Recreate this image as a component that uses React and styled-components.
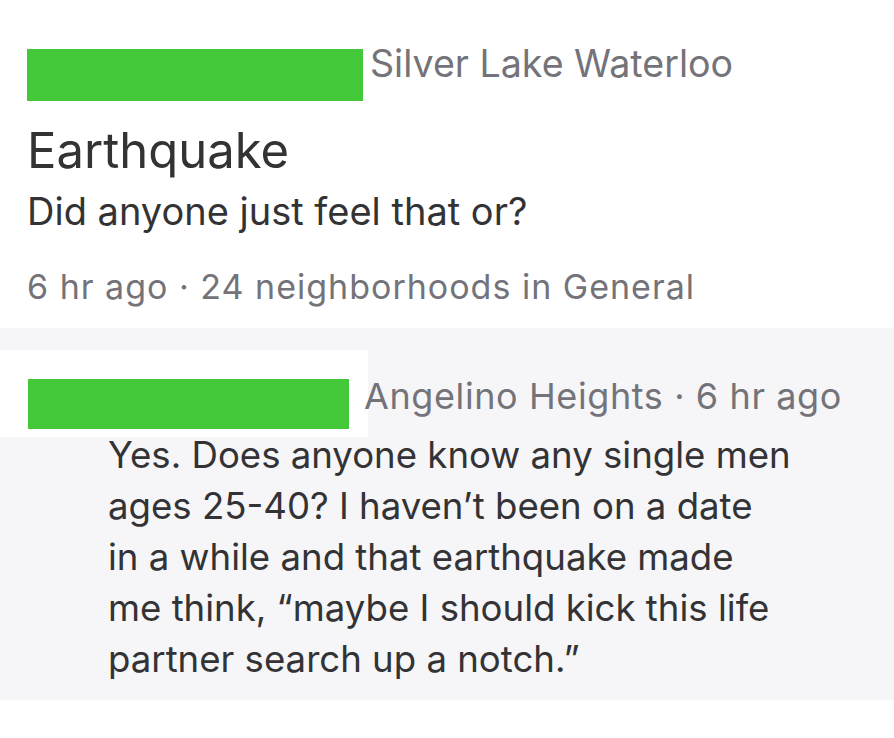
import styled, { createGlobalStyle } from 'styled-components';

const GlobalStyle = createGlobalStyle`
  html, body {
    margin: 0;
    padding: 0;
    background: #ffffff;
  }
  body {
    font-family: Inter, "Liberation Sans", Arial, sans-serif;
    color: #333336;
  }
`;

const Page = styled.div`
  width: 894px;
  height: 738px;
  overflow: hidden;
  background: #ffffff;
`;

const Post = styled.section`
  padding: 42px 0 21px 27px;
`;

const Header = styled.div`
  display: flex;
  align-items: flex-start;
  gap: 7px;
`;

const Redacted = styled.div`
  flex: none;
  width: ${p => p.$w}px;
  height: ${p => p.$h}px;
  margin-top: ${p => p.$top || 0}px;
  background: #43c83a;
`;

const Meta = styled.div`
  font-size: ${p => p.$size}px;
  line-height: ${p => p.$lh}px;
  letter-spacing: ${p => p.$ls || 0}px;
  color: #737379;
  white-space: nowrap;
  margin-top: ${p => p.$top || 0}px;
`;

const Title = styled.h1`
  margin: 22px 0 0;
  font-size: 49px;
  line-height: 56px;
  font-weight: 400;
  color: #333336;
`;

const Body = styled.p`
  margin: 10px 0 0;
  font-size: 38px;
  line-height: 44px;
  color: #333336;
`;

const Footer = styled(Meta)`
  margin-top: 34px;
`;

const Comments = styled.section`
  background: #f6f6f8;
  padding: 22px 0 15px;
`;

const CommentHeader = styled.div`
  display: flex;
  align-items: flex-start;
`;

const Patch = styled.div`
  flex: none;
  width: 368px;
  height: 87px;
  padding: 29px 0 0 28px;
  box-sizing: border-box;
  background: #ffffff;
`;

const CommentMeta = styled(Meta)`
  margin-left: -4px;
`;

const CommentText = styled.div`
  margin: -7px 0 0 108px;
  font-size: 36.6px;
  line-height: 51px;
  color: #333336;
`;

const Line = styled.span`
  display: block;
  white-space: nowrap;
`;

const lines = [
  'Yes. Does anyone know any single men',
  'ages 25-40? I haven\u2019t been on a date',
  'in a while and that earthquake made',
  'me think, \u201cmaybe I should kick this life',
  'partner search up a notch.\u201d',
];

export default function App() {
  return (
    <Page>
      <GlobalStyle />
      <Post>
        <Header>
          <Redacted $w={336} $h={52} $top={7} />
          <Meta $size={37.6} $lh={44}>Silver Lake Waterloo</Meta>
        </Header>
        <Title>Earthquake</Title>
        <Body>Did anyone just feel that or?</Body>
        <Footer $size={34} $lh={40} $ls={1}>
          6 hr ago · 24 neighborhoods in General
        </Footer>
      </Post>
      <Comments>
        <CommentHeader>
          <Patch>
            <Redacted $w={321} $h={50} />
          </Patch>
          <CommentMeta $size={36} $lh={42} $top={25} $ls={0.6}>
            Angelino Heights · 6 hr ago
          </CommentMeta>
        </CommentHeader>
        <CommentText>
          {lines.map(l => (
            <Line key={l}>{l}</Line>
          ))}
        </CommentText>
      </Comments>
    </Page>
  );
}
